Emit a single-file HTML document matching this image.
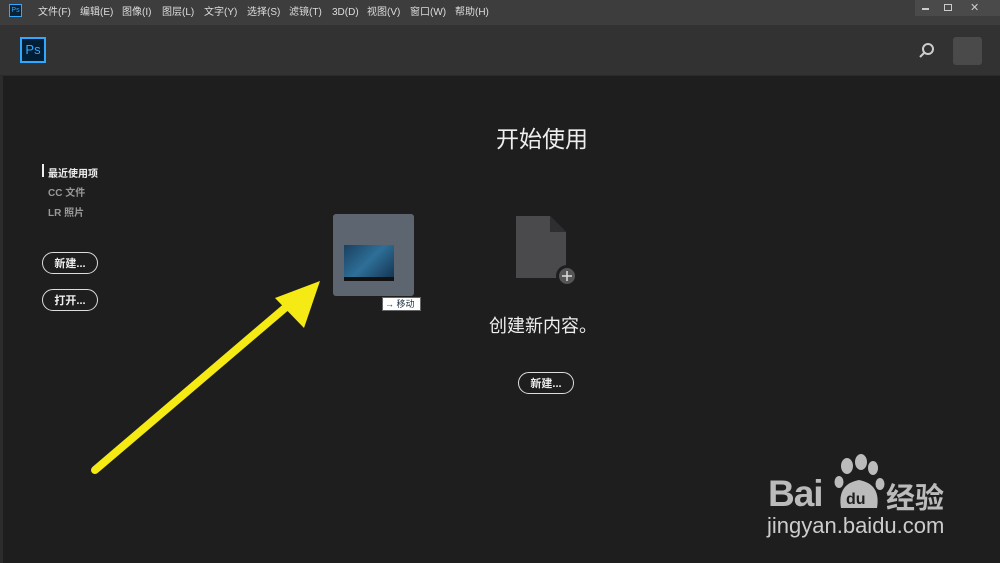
<!DOCTYPE html>
<html><head><meta charset="utf-8"><style>
*{margin:0;padding:0;box-sizing:border-box}
body{width:1000px;height:563px;overflow:hidden;background:#1e1e1f;font-family:"Liberation Sans","Noto Sans CJK SC",sans-serif;position:relative;color:#ddd}
.menu{position:absolute;left:0;top:0;width:1000px;height:25px;background:#3d3d3d;font-size:10px;color:#ddd}
.menu span{position:absolute;top:6px;line-height:14px;height:14px;display:flex;align-items:center}
.hdr{position:absolute;left:0;top:25px;width:1000px;height:51px;background:#323233;border-bottom:1px solid #2a2a2a}
.pill{position:absolute;border:1.5px solid #ddd;border-radius:13px;font-size:11px;font-weight:bold;color:#eee;height:22px;display:flex;align-items:center;justify-content:center}
.side{position:absolute;left:48px;font-size:10px;font-weight:bold;color:#999}
.abs{position:absolute}
</style></head><body>
<div class="menu">
<div class="abs" style="left:9px;top:4px;width:13px;height:13px;border:1px solid #31a8ff;background:#0a2236;font-size:7px;color:#31a8ff;line-height:11px;text-align:center">Ps</div>
<span style="left:38px">文件(F)</span><span style="left:80px">编辑(E)</span><span style="left:122px">图像(I)</span><span style="left:162px">图层(L)</span><span style="left:204px">文字(Y)</span><span style="left:247px">选择(S)</span><span style="left:289px">滤镜(T)</span><span style="left:332px">3D(D)</span><span style="left:367px">视图(V)</span><span style="left:410px">窗口(W)</span><span style="left:455px">帮助(H)</span>
<div class="abs" style="left:915px;top:0;width:85px;height:16px;background:#4a4a4a"></div>
<div class="abs" style="left:922px;top:8px;width:7px;height:2px;background:#ccc"></div>
<div class="abs" style="left:944px;top:4px;width:8px;height:7px;border:1.5px solid #ccc"></div>
<div class="abs" style="left:970px;top:1px;font-size:11px;color:#ccc">✕</div>
</div>
<div class="hdr">
<div class="abs" style="left:20px;top:12px;width:26px;height:26px;border:2px solid #31a8ff;background:#001e36;color:#31a8ff;font-size:13px;line-height:22px;text-align:center">Ps</div>
<svg class="abs" style="left:917px;top:15px" width="20" height="20"><circle cx="11" cy="9" r="5" fill="none" stroke="#ccc" stroke-width="2"/><line x1="7" y1="13" x2="3" y2="17" stroke="#ccc" stroke-width="2"/></svg>
<div class="abs" style="left:953px;top:12px;width:29px;height:28px;background:#4a4a4a;border-radius:3px"></div>
</div>
<div class="abs" style="left:0;top:76px;width:3px;height:487px;background:#2c2c2c"></div>
<div class="abs" style="left:496px;top:120px;font-size:23px;color:#eee">开始使用</div>
<div class="abs" style="left:42px;top:164px;width:2px;height:13px;background:#eee"></div>
<div class="side" style="top:165px;color:#eee">最近使用项</div>
<div class="side" style="top:184px">CC 文件</div>
<div class="side" style="top:204px">LR 照片</div>
<div class="pill" style="left:42px;top:252px;width:56px">新建...</div>
<div class="pill" style="left:42px;top:289px;width:56px">打开...</div>
<div class="abs" style="left:333px;top:214px;width:81px;height:82px;background:#5d6670;border-radius:3px"></div>
<div class="abs" style="left:344px;top:245px;width:50px;height:36px;background:linear-gradient(135deg,#1a4060,#2e6f98 50%,#153552);border-bottom:4px solid #111"></div>
<div class="abs" style="left:382px;top:297px;width:39px;height:14px;background:#fff;border:1px solid #666;font-size:9px;color:#234;line-height:12px;padding-left:2px">→ 移动</div>
<svg class="abs" style="left:512px;top:212px" width="70" height="80"><path d="M4 4H38L54 20V66H4Z" fill="#4a4a4c"/><path d="M38 4V20H54" fill="#2e2e30"/><circle cx="55" cy="64" r="11" fill="#1e1e1f"/><circle cx="55" cy="64" r="8" fill="#555"/><path d="M55 59v10M50 64h10" stroke="#ddd" stroke-width="1.5"/></svg>
<div class="abs" style="left:489px;top:312px;font-size:18px;color:#eee">创建新内容。</div>
<div class="pill" style="left:518px;top:372px;width:56px">新建...</div>
<svg class="abs" style="left:0;top:0" width="1000" height="563"><line x1="95" y1="470" x2="292" y2="302" stroke="#f5ea14" stroke-width="8" stroke-linecap="round"/><polygon points="320,281 275,298 304,328" fill="#f5ea14"/></svg>
<div class="abs" style="left:768px;top:473px;font-size:37px;font-weight:bold;color:#bbb;letter-spacing:-1px">Bai</div>
<svg class="abs" style="left:833px;top:452px" width="52" height="64"><ellipse cx="14" cy="14" rx="6" ry="8" fill="#bbb"/><ellipse cx="28" cy="10" rx="6" ry="8" fill="#bbb"/><ellipse cx="40" cy="16" rx="5" ry="7" fill="#bbb"/><ellipse cx="6" cy="30" rx="4.5" ry="6" fill="#bbb"/><ellipse cx="47" cy="32" rx="4.5" ry="6" fill="#bbb"/><path d="M8 56Q4 32 26 28Q48 32 44 56Z" fill="#bbb"/><text x="13" y="52" font-size="16" font-weight="bold" fill="#1e1e1f" font-family="Liberation Sans">du</text></svg>
<div class="abs" style="left:886px;top:475px;font-size:29px;font-weight:bold;color:#bbb">经验</div>
<div class="abs" style="left:767px;top:513px;font-size:22px;color:#ccc">jingyan.baidu.com</div>
</body></html>
